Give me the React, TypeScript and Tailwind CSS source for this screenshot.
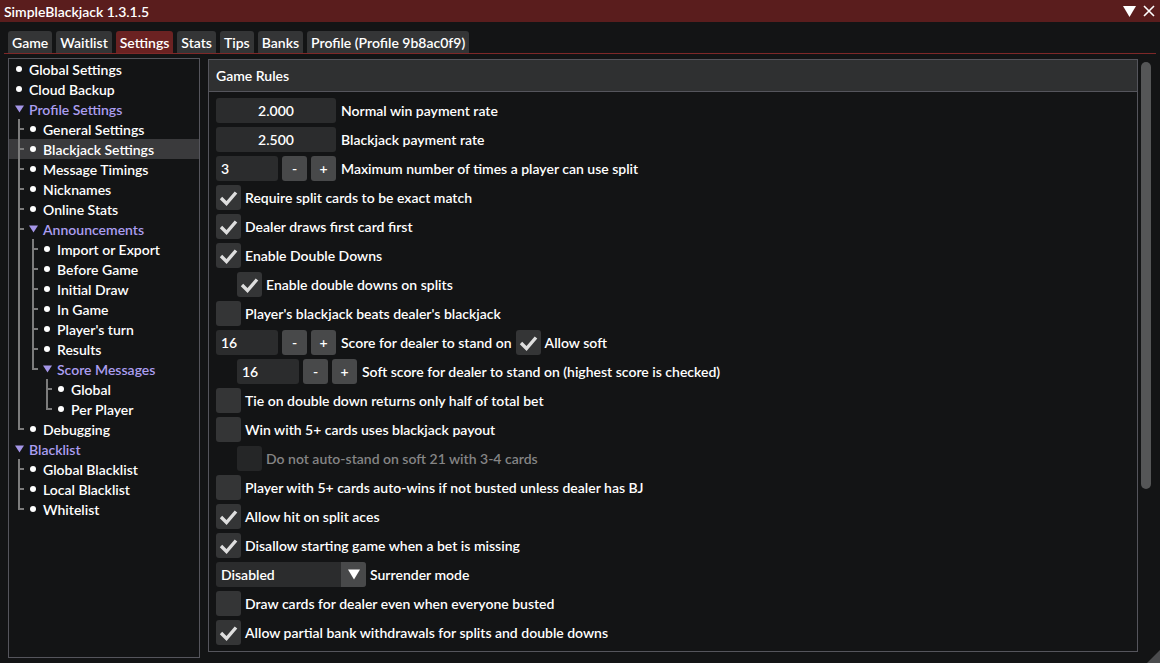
import React from 'react'

type TreeNode = { label: string; children?: TreeNode[]; selected?: boolean }

const tree: TreeNode[] = [
  { label: 'Global Settings' },
  { label: 'Cloud Backup' },
  {
    label: 'Profile Settings',
    children: [
      { label: 'General Settings' },
      { label: 'Blackjack Settings', selected: true },
      { label: 'Message Timings' },
      { label: 'Nicknames' },
      { label: 'Online Stats' },
      {
        label: 'Announcements',
        children: [
          { label: 'Import or Export' },
          { label: 'Before Game' },
          { label: 'Initial Draw' },
          { label: 'In Game' },
          { label: "Player's turn" },
          { label: 'Results' },
          { label: 'Score Messages', children: [{ label: 'Global' }, { label: 'Per Player' }] },
        ],
      },
      { label: 'Debugging' },
    ],
  },
  {
    label: 'Blacklist',
    children: [{ label: 'Global Blacklist' }, { label: 'Local Blacklist' }, { label: 'Whitelist' }],
  },
]

const tabs = ['Game', 'Waitlist', 'Settings', 'Stats', 'Tips', 'Banks', 'Profile (Profile 9b8ac0f9)']

// tailwind needs full class names, so the per-level values live in lookups
const padByDepth = ['pl-[4px]', 'pl-[18px]', 'pl-[32px]', 'pl-[46px]']
const railLeft = ['left-[9px]', 'left-[23px]', 'left-[37px]']

type FlatRow = { node: TreeNode; depth: number; rails: boolean[]; last: boolean }

function flatten(nodes: TreeNode[], depth: number, rails: boolean[], out: FlatRow[]) {
  nodes.forEach((node, i) => {
    const last = i === nodes.length - 1
    out.push({ node, depth, rails, last })
    if (node.children) flatten(node.children, depth + 1, depth > 0 ? [...rails, !last] : [], out)
  })
  return out
}

function TreeRow({ row }: { row: FlatRow }) {
  const { node, depth, rails, last } = row
  const open = !!node.children
  return (
    <div
      className={`relative flex items-center h-[20px] ${padByDepth[depth]} ${node.selected ? 'bg-[#3a3a3c]' : ''}`}
    >
      {rails.map((on, a) =>
        on ? <span key={a} className={`absolute top-0 bottom-0 w-[2px] bg-[#7c7c7c] ${railLeft[a]}`} /> : null
      )}
      {depth > 0 && (
        <>
          <span
            className={`absolute top-0 w-[2px] bg-[#7c7c7c] ${railLeft[depth - 1]} ${last ? 'h-[11px]' : 'bottom-0'}`}
          />
          <span className={`absolute top-[9px] h-[2px] w-[6px] bg-[#7c7c7c] ${railLeft[depth - 1]}`} />
        </>
      )}
      <span className="w-[12px] flex justify-center shrink-0">
        {open ? (
          <svg width="9" height="8" viewBox="0 0 9 8">
            <path d="M0 0.5 H9 L4.5 7.5 Z" fill="#a596e8" />
          </svg>
        ) : (
          <span className="w-[6px] h-[6px] rounded-full bg-white" />
        )}
      </span>
      <span className={`ml-[4px] whitespace-nowrap ${open ? 'text-[#ab9ef0]' : 'text-white'}`}>{node.label}</span>
    </div>
  )
}

function Check({ checked, disabled }: { checked?: boolean; disabled?: boolean }) {
  return (
    <div
      className={`w-[25px] h-[25px] rounded-[3px] shrink-0 ${disabled ? 'bg-[#252627]' : 'bg-[#343536]'}`}
    >
      {checked && (
        <svg width="25" height="25" viewBox="0 0 25 25">
          <path
            d="M5 13 L10.5 18.5 L20 7.5"
            stroke="#dedede"
            strokeWidth="3.4"
            fill="none"
            strokeLinejoin="miter"
          />
        </svg>
      )}
    </div>
  )
}

function CheckRow({
  label,
  checked,
  disabled,
  indent,
}: {
  label: string
  checked?: boolean
  disabled?: boolean
  indent?: boolean
}) {
  return (
    <div className={`flex items-center gap-[4px] h-[25px] ${indent ? 'pl-[21px]' : ''}`}>
      <Check checked={checked} disabled={disabled} />
      <span className={disabled ? 'text-[#858585]' : 'text-white'}>{label}</span>
    </div>
  )
}

function Stepper({ value }: { value: string }) {
  return (
    <>
      <div className="w-[62px] h-[25px] rounded-[3px] bg-[#2b2c2d] flex items-center pl-[5px] shrink-0">
        {value}
      </div>
      <div className="w-[25px] h-[25px] rounded-[3px] bg-[#48494a] flex items-center justify-center shrink-0">
        -
      </div>
      <div className="w-[25px] h-[25px] rounded-[3px] bg-[#48494a] flex items-center justify-center shrink-0">
        +
      </div>
    </>
  )
}

export default function App() {
  const rows = flatten(tree, 0, [], [])
  return (
    <div className="relative w-[1160px] h-[663px] overflow-hidden bg-[#131415] text-white text-[14px] font-semibold font-[Lato,sans-serif] flex flex-col">
      {/* title bar */}
      <div className="h-[22px] shrink-0 bg-[#5a1d1d] flex items-center pl-[4px] pr-[5px]">
        <span className="text-[14px] font-semibold">SimpleBlackjack 1.3.1.5</span>
        <div className="ml-auto flex items-center gap-[7px]">
          <svg width="13" height="11" viewBox="0 0 13 11">
            <path d="M0 0 H13 L6.5 11 Z" fill="#ffffff" />
          </svg>
          <svg width="12" height="12" viewBox="0 0 12 12">
            <path d="M1 1 L11 11 M11 1 L1 11" stroke="#ffffff" strokeWidth="1.6" />
          </svg>
        </div>
      </div>

      {/* tabs */}
      <div className="mt-[9px] px-[8px] flex gap-[4px]">
        {tabs.map((t) => (
          <div
            key={t}
            className={`h-[22px] px-[4px] rounded-t-[3px] flex items-center ${
              t === 'Settings' ? 'bg-[#6b2222]' : 'bg-[#343536]'
            }`}
          >
            {t}
          </div>
        ))}
      </div>
      <div className="mx-[4px] h-[1px] bg-[#7e2828]" />

      {/* body */}
      <div className="mt-[5px] flex items-start pl-[8px]">
        <div className="-mt-[1px] w-[192px] h-[600px] border border-[#55555c] shrink-0">
          {rows.map((r, i) => (
            <TreeRow key={i} row={r} />
          ))}
        </div>

        <div className="ml-[8px] w-[930px] h-[593px] border border-[#55555c] shrink-0 flex flex-col">
          <div className="h-[32px] shrink-0 bg-[#2f3031] border-b border-[#55555c] flex items-center px-[7px]">
            Game Rules
          </div>
          <div className="flex flex-col gap-[4px] pt-[6px] px-[7px]">
            <div className="flex items-center gap-[5px] h-[25px]">
              <div className="w-[120px] h-[25px] rounded-[3px] bg-[#2b2c2d] flex items-center justify-center">
                2.000
              </div>
              <span>Normal win payment rate</span>
            </div>
            <div className="flex items-center gap-[5px] h-[25px]">
              <div className="w-[120px] h-[25px] rounded-[3px] bg-[#2b2c2d] flex items-center justify-center">
                2.500
              </div>
              <span>Blackjack payment rate</span>
            </div>
            <div className="flex items-center gap-[4px] h-[25px]">
              <Stepper value="3" />
              <span className="ml-[1px]">Maximum number of times a player can use split</span>
            </div>
            <CheckRow checked label="Require split cards to be exact match" />
            <CheckRow checked label="Dealer draws first card first" />
            <CheckRow checked label="Enable Double Downs" />
            <CheckRow checked indent label="Enable double downs on splits" />
            <CheckRow label="Player's blackjack beats dealer's blackjack" />
            <div className="flex items-center gap-[4px] h-[25px]">
              <Stepper value="16" />
              <span className="ml-[1px]">Score for dealer to stand on</span>
              <Check checked />
              <span>Allow soft</span>
            </div>
            <div className="flex items-center gap-[4px] h-[25px] pl-[21px]">
              <Stepper value="16" />
              <span className="ml-[1px]">Soft score for dealer to stand on (highest score is checked)</span>
            </div>
            <CheckRow label="Tie on double down returns only half of total bet" />
            <CheckRow label="Win with 5+ cards uses blackjack payout" />
            <CheckRow indent disabled label="Do not auto-stand on soft 21 with 3-4 cards" />
            <CheckRow label="Player with 5+ cards auto-wins if not busted unless dealer has BJ" />
            <CheckRow checked label="Allow hit on split aces" />
            <CheckRow checked label="Disallow starting game when a bet is missing" />
            <div className="flex items-center gap-[4px] h-[25px]">
              <div className="w-[150px] h-[25px] rounded-[3px] bg-[#2b2c2d] flex items-center overflow-hidden">
                <span className="pl-[5px]">Disabled</span>
                <span className="ml-auto w-[25px] h-full bg-[#48494a] flex items-center justify-center">
                  <svg width="12" height="11" viewBox="0 0 12 11">
                    <path d="M0 0.5 H12 L6 10.5 Z" fill="#ffffff" />
                  </svg>
                </span>
              </div>
              <span>Surrender mode</span>
            </div>
            <CheckRow label="Draw cards for dealer even when everyone busted" />
            <CheckRow checked label="Allow partial bank withdrawals for splits and double downs" />
          </div>
        </div>

        <div className="ml-[3px] pt-[3px]">
          <div className="w-[10px] h-[427px] rounded-full bg-[#555657]" />
        </div>
      </div>

      {/* resize grip */}
      <svg className="absolute right-0 bottom-0" width="13" height="13" viewBox="0 0 13 13">
        <path d="M13 0 V13 H0 Z" fill="#4a4b4d" />
      </svg>
    </div>
  )
}
